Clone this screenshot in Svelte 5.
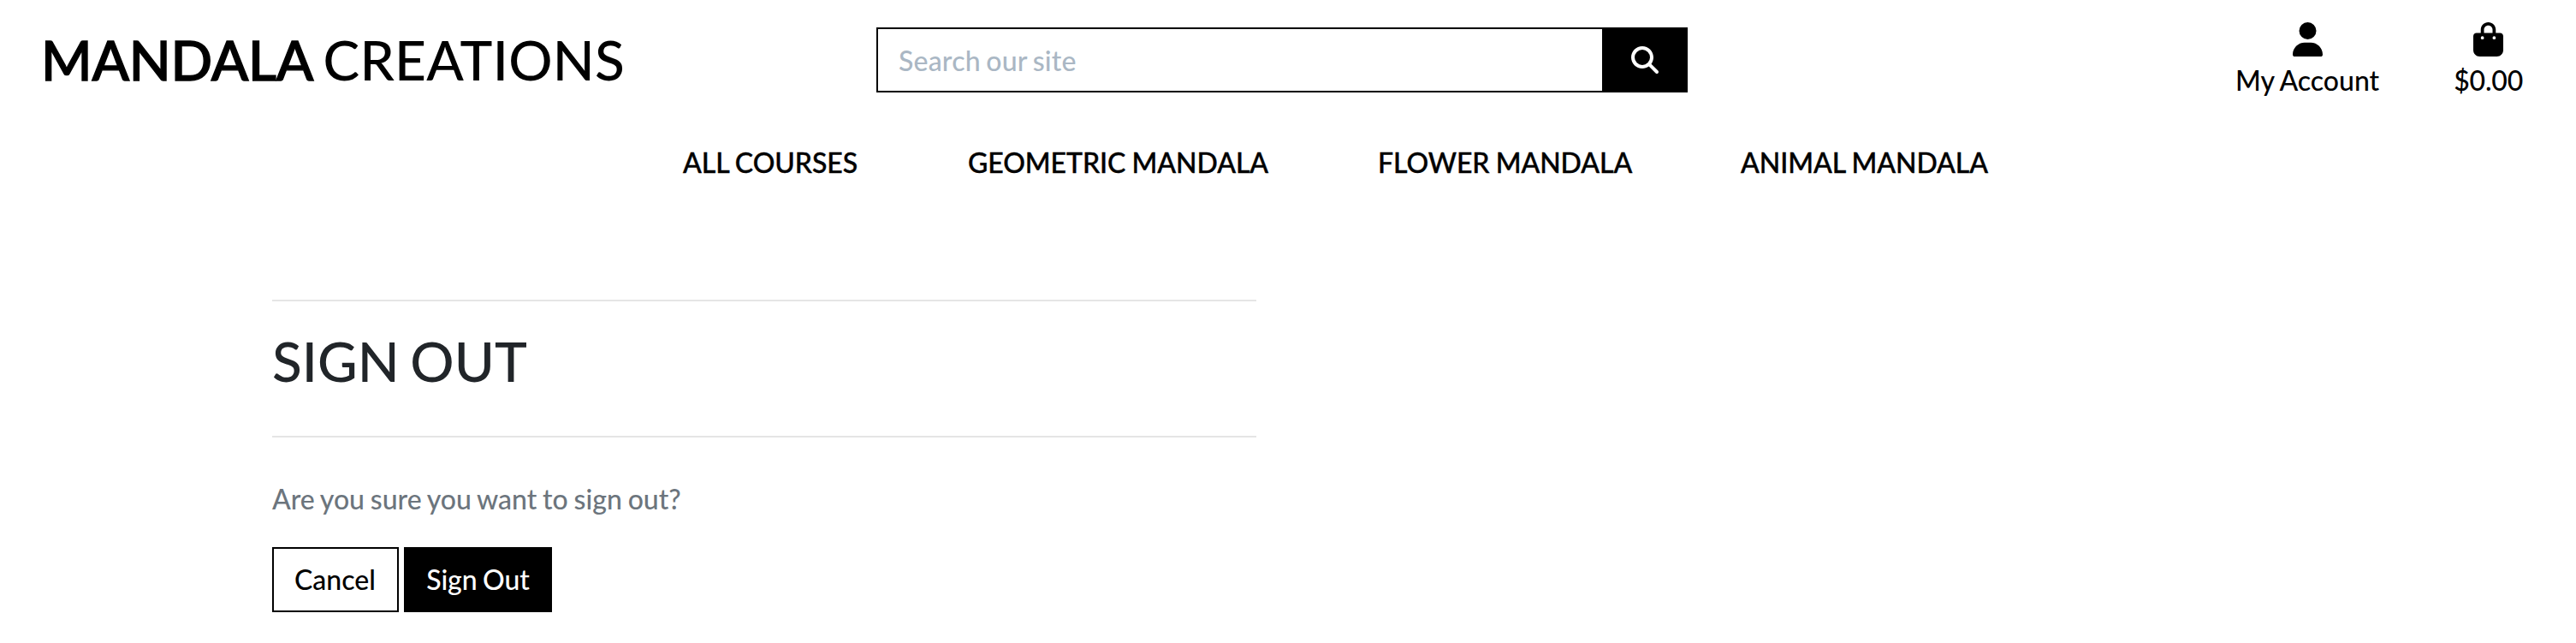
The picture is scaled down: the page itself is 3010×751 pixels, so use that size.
<script>
  const links = ['ALL COURSES', 'GEOMETRIC MANDALA', 'FLOWER MANDALA', 'ANIMAL MANDALA'];
</script>

<div class="page">
  <header>
    <a class="logo" href="#home"><strong>MANDALA</strong> <span>CREATIONS</span></a>
    <form class="search">
      <input type="text" placeholder="Search our site" />
      <button type="button" aria-label="Search">
        <svg viewBox="0 0 512 512" width="32" height="32"><path d="M416 208c0 45.9-14.9 88.3-40 122.7L502.6 457.4c12.5 12.5 12.5 32.8 0 45.3s-32.8 12.5-45.3 0L330.7 376c-34.4 25.2-76.8 40-122.7 40C93.1 416 0 322.9 0 208S93.1 0 208 0S416 93.1 416 208zM208 352a144 144 0 1 0 0-288 144 144 0 1 0 0 288z" /></svg>
      </button>
    </form>
    <div class="tools">
      <a href="#account">
        <svg viewBox="0 0 448 512" width="35" height="40"><path d="M224 256A128 128 0 1 0 224 0a128 128 0 1 0 0 256zm-45.7 48C79.8 304 0 383.8 0 482.3C0 498.7 13.3 512 29.7 512H418.3c16.4 0 29.7-13.3 29.7-29.7C448 383.8 368.2 304 269.7 304H178.3z" /></svg>
        <span>My Account</span>
      </a>
      <a class="bag" href="#bag">
        <svg viewBox="0 0 448 512" width="35" height="40"><path d="M160 112c0-35.3 28.7-64 64-64s64 28.7 64 64v48H160V112zm-48 48H48c-26.5 0-48 21.5-48 48V416c0 53 43 96 96 96H352c53 0 96-43 96-96V208c0-26.5-21.5-48-48-48H336V112C336 50.1 285.9 0 224 0S112 50.1 112 112v48zm24 48a24 24 0 1 1 0 48 24 24 0 1 1 0-48zm152 24a24 24 0 1 1 48 0 24 24 0 1 1 -48 0z" /></svg>
        <span>$0.00</span>
      </a>
    </div>
  </header>
  <nav>
    {#each links as link}
      <a href="#courses">{link}</a>
    {/each}
  </nav>
  <main>
    <hr />
    <h2>SIGN OUT</h2>
    <hr />
    <p>Are you sure you want to sign out?</p>
    <div class="actions">
      <a class="btn cancel" href="#cancel">Cancel</a>
      <button class="btn dark" type="button">Sign Out</button>
    </div>
  </main>
</div>

<style>
  :global(body) { background: #fff; }
  .page {
    box-sizing: border-box;
    height: 751px;
    overflow: hidden;
    font: 500 32px/48px Lato, sans-serif;
    word-spacing: -0.8px;
    color: #212529;
  }
  a { color: #000; text-decoration: none; white-space: nowrap; }
  svg { display: block; fill: currentColor; }
  header {
    display: grid;
    grid-template-columns: 976px 948px 1fr;
    height: 140px;
  }
  .logo {
    padding: 31px 0 0 48px;
    font-size: 64px;
    line-height: 77px;
    word-spacing: -4.8px;
  }
  .logo span { letter-spacing: 0.25px; }
  strong { font-weight: 500; letter-spacing: -0.25px; -webkit-text-stroke: 1.4px #000; }
  .search {
    display: flex;
    height: 76px;
    margin: 32px 0 0 48px;
    width: 948px;
  }
  input {
    box-sizing: border-box;
    flex: 1;
    min-width: 0;
    padding: 13px 24px 11px;
    border: 2px solid #000;
    border-right: 0;
    border-radius: 0;
    background: #fff;
    font: inherit;
    letter-spacing: 0.2px;
    word-spacing: -1.7px;
    outline: 0;
  }
  input::placeholder { color: #aab7c4; opacity: 1; }
  .search button {
    width: 100px;
    display: flex;
    align-items: center;
    justify-content: center;
    padding: 0;
    border: 0;
    background: #000;
    color: #fff;
  }
  .tools {
    display: flex;
    justify-content: flex-end;
    gap: 87px;
    padding: 26px 62px 0 0;
  }
  .tools a { display: flex; flex-direction: column; align-items: center; gap: 4px; }
  .tools .bag { letter-spacing: -0.2px; }
  nav {
    display: grid;
    grid-template-columns: 333px 479px 424px auto;
    align-items: start;
    box-sizing: border-box;
    padding: 26px 0 0 798px;
    height: 210px;
  }
  nav a { -webkit-text-stroke: 0.4px #000; letter-spacing: -0.06px; }
  main { width: 1150px; margin-left: 318px; }
  hr { height: 2px; margin: 0; border: 0; background: #e5e5e5; }
  h2 {
    margin: 31px 0 49px;
    font-size: 64px;
    font-weight: 500;
    line-height: 77px;
    word-spacing: -3.5px;
  }
  p { margin: 48px 0 32px; color: #6c757d; word-spacing: -1.3px; }
  .actions { display: flex; gap: 6px; }
  .btn {
    box-sizing: border-box;
    height: 76px;
    padding: 12px 24px;
    border: 2px solid #000;
    background: #fff;
    color: #000;
    font: inherit;
    word-spacing: -1.4px;
  }
  .cancel { width: 148px; }
  .dark { width: 173px; background: #000; color: #fff; letter-spacing: -0.1px; white-space: nowrap; }
</style>
